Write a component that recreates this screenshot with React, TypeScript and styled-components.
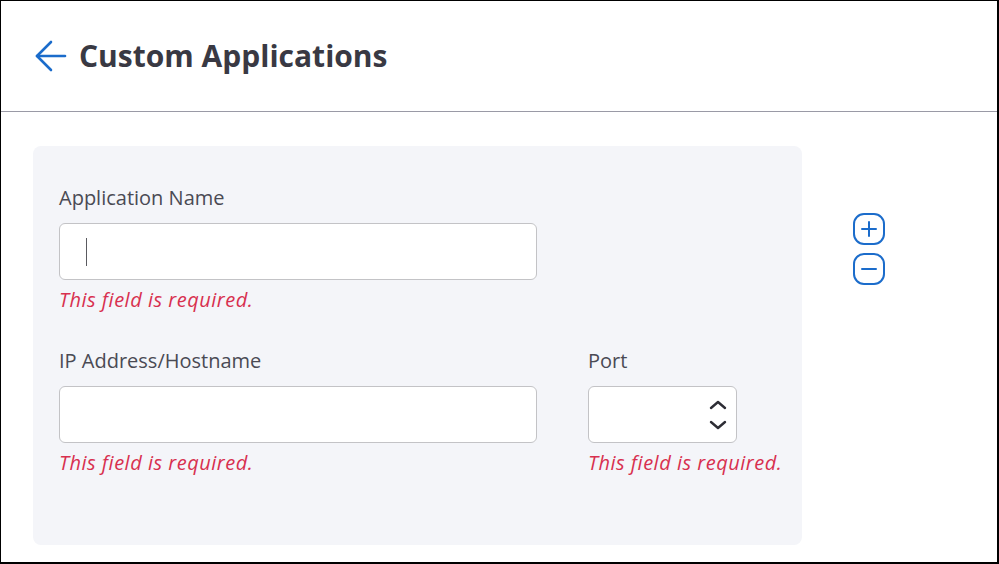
import React from "react";
import styled, { createGlobalStyle } from "styled-components";

const Global = createGlobalStyle`
  html, body { margin: 0; padding: 0; background: #fff; }
  body { font-family: "Open Sans", "Noto Sans", sans-serif; }
  * { box-sizing: border-box; }
`;

const Frame = styled.div`
  width: 999px;
  height: 564px;
  border-top: 1px solid #000;
  border-left: 1px solid #000;
  border-right: 2px solid #000;
  border-bottom: 2px solid #000;
  background: #fff;
  overflow: hidden;
  display: flex;
  flex-direction: column;
`;

const Header = styled.header`
  height: 111px;
  flex-shrink: 0;
  display: flex;
  align-items: center;
  gap: 12px;
  padding: 0 0 0 32px;
  border-bottom: 1px solid #9a9aa6;
`;

const BackButton = styled.button`
  border: none;
  background: none;
  padding: 0;
  width: 34px;
  height: 34px;
  display: flex;
  align-items: center;
  justify-content: center;
  cursor: pointer;
`;

const Title = styled.h1`
  margin: 0;
  font-family: "Open Sans", sans-serif;
  font-size: 30px;
  line-height: 40px;
  font-weight: 700;
  color: #393943;
`;

const Body = styled.main`
  display: flex;
  align-items: flex-start;
  padding: 34px 0 0 32px;
`;

const Card = styled.section`
  width: 769px;
  height: 399px;
  background: #f4f5f9;
  border-radius: 8px;
  padding: 39px 26px 0 26px;
  display: flex;
  flex-direction: column;
  gap: 35px;
`;

const Row = styled.div`
  display: flex;
  gap: 51px;
`;

const Field = styled.div<{ $width: number }>`
  width: ${(p) => p.$width}px;
  display: flex;
  flex-direction: column;
`;

const Label = styled.label`
  font-size: 20px;
  line-height: 26px;
  color: #4a4a54;
  margin-bottom: 12px;
  white-space: nowrap;
`;

const Box = styled.div`
  height: 57px;
  background: #fff;
  border: 1px solid #c3c3c6;
  border-radius: 6px;
  display: flex;
  align-items: center;
  padding: 0 8px 0 26px;
`;

const Caret = styled.span`
  width: 1px;
  height: 28px;
  background: #5a5a60;
`;

const Spinner = styled.div`
  margin-left: auto;
  display: flex;
  flex-direction: column;
  gap: 10px;
`;

const Error = styled.div`
  margin-top: 7px;
  font-size: 20px;
  line-height: 26px;
  font-style: italic;
  letter-spacing: 0.5px;
  color: #d8304f;
  white-space: nowrap;
`;

const Actions = styled.div`
  margin: 67px 0 0 51px;
  display: flex;
  flex-direction: column;
  gap: 8px;
`;

const IconButton = styled.button`
  border: none;
  background: none;
  padding: 0;
  width: 32px;
  height: 32px;
  cursor: pointer;
  display: block;
`;

const BLUE = "#1b6ccb";

const ArrowLeft = () => (
  <svg width="34" height="34" viewBox="0 0 34 34" fill="none">
    <path d="M32 17H4" stroke={BLUE} strokeWidth="2.6" strokeLinecap="round" />
    <path d="M18 3L4 17L18 31" stroke={BLUE} strokeWidth="2.6" strokeLinecap="round" strokeLinejoin="round" />
  </svg>
);

const SquareIcon = ({ plus }: { plus?: boolean }) => (
  <svg width="32" height="32" viewBox="0 0 32 32" fill="none">
    <rect x="1" y="1" width="30" height="30" rx="10" stroke={BLUE} strokeWidth="2" />
    <path d="M9 16H23" stroke={BLUE} strokeWidth="2" strokeLinecap="round" />
    {plus && <path d="M16 9V23" stroke={BLUE} strokeWidth="2" strokeLinecap="round" />}
  </svg>
);

const Chevron = ({ up }: { up?: boolean }) => (
  <svg width="20" height="10" viewBox="0 0 20 10" fill="none">
    <path
      d={up ? "M3 8L10 2L17 8" : "M3 2L10 8L17 2"}
      stroke="#2d2d35"
      strokeWidth="2.4"
      strokeLinecap="round"
      strokeLinejoin="round"
    />
  </svg>
);

export default function App() {
  return (
    <>
      <Global />
      <Frame>
        <Header>
          <BackButton aria-label="Back">
            <ArrowLeft />
          </BackButton>
          <Title>Custom Applications</Title>
        </Header>
        <Body>
          <Card>
            <Row>
              <Field $width={478}>
                <Label>Application Name</Label>
                <Box>
                  <Caret />
                </Box>
                <Error>This field is required.</Error>
              </Field>
            </Row>
            <Row>
              <Field $width={478}>
                <Label>IP Address/Hostname</Label>
                <Box />
                <Error>This field is required.</Error>
              </Field>
              <Field $width={149}>
                <Label>Port</Label>
                <Box>
                  <Spinner>
                    <Chevron up />
                    <Chevron />
                  </Spinner>
                </Box>
                <Error>This field is required.</Error>
              </Field>
            </Row>
          </Card>
          <Actions>
            <IconButton aria-label="Add">
              <SquareIcon plus />
            </IconButton>
            <IconButton aria-label="Remove">
              <SquareIcon />
            </IconButton>
          </Actions>
        </Body>
      </Frame>
    </>
  );
}
